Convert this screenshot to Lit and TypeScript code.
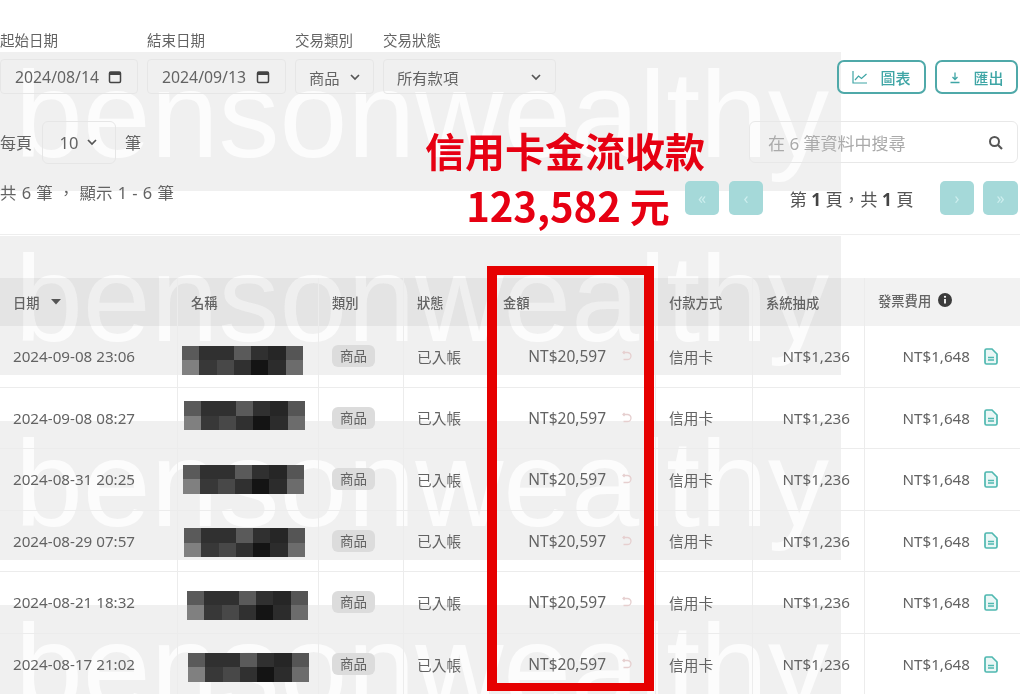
import { LitElement, html, css, svg } from 'lit';
import { customElement } from 'lit/decorators.js';

const TOP = [0x5a, 0x30, 0x30, 0x5a, 0x30, 0x26, 0x55];
const BOTTOM = [0x80, 0x38, 0x48, 0x30, 0x14, 0x2c, 0x6c];

const ROWS = [
  { date: '2024-09-08 23:06', x: 4, y: 4 },
  { date: '2024-09-08 08:27', x: 6, y: -2 },
  { date: '2024-08-31 20:25', x: 5, y: 0 },
  { date: '2024-08-29 07:57', x: 6, y: 2 },
  { date: '2024-08-21 18:32', x: 9, y: 3 },
  { date: '2024-08-17 21:02', x: 10, y: 3 },
];

const BANDS = [52, 236, 421, 605];

const calendar = svg`<svg class="ico" width="14" height="14" viewBox="0 0 14 14"><rect x="1.5" y="2" width="11" height="10.5" rx="1.2" fill="none" stroke="#444" stroke-width="1.5"/><rect x="1.5" y="2" width="11" height="3" fill="#444"/></svg>`;
const chevron = svg`<svg class="ico" width="12" height="12" viewBox="0 0 12 12"><path d="M2 4l4 4 4-4" fill="none" stroke="#555" stroke-width="1.7"/></svg>`;
const chart = svg`<svg class="ico" width="16" height="14" viewBox="0 0 16 14"><path d="M1 1v12h14M3 10l3.5-4 3 2.5L14.5 4" fill="none" stroke="#3ea5a5" stroke-width="1.2"/></svg>`;
const download = svg`<svg class="ico" width="12" height="13" viewBox="0 0 12 13"><path d="M6 1.5v7M3.5 6L6 8.5 8.5 6M1.5 11.5h9" fill="none" stroke="#3ea5a5" stroke-width="1.3"/></svg>`;
const search = svg`<svg class="ico" width="15" height="15" viewBox="0 0 15 15"><circle cx="6.5" cy="6.5" r="4.5" fill="none" stroke="#555" stroke-width="2"/><path d="M10 10l4 4" stroke="#555" stroke-width="2.2"/></svg>`;
const undo = svg`<svg class="ico" width="12" height="12" viewBox="0 0 12 12"><path d="M3 2.5h4.5a3 3 0 0 1 0 7H3.5M4.5 1L3 2.5 4.5 4" fill="none" stroke="#e6cfcf" stroke-width="1.3"/></svg>`;
const doc = svg`<svg class="ico" width="14" height="17" viewBox="0 0 14 17"><path d="M2.5 1H8l5 5v8.5a1.5 1.5 0 0 1-1.5 1.5h-9A1.5 1.5 0 0 1 1 14.5v-12A1.5 1.5 0 0 1 2.5 1z" fill="#eaf7f6" stroke="#4fb8b0" stroke-width="1.7"/><path d="M4 9.5h6M4 12h6" stroke="#4fb8b0" stroke-width="1.3"/></svg>`;
const info = svg`<svg class="ico" width="14" height="14" viewBox="0 0 14 14"><circle cx="7" cy="7" r="7" fill="#3c3c3c"/><path d="M7 6v4.5" stroke="#fff" stroke-width="1.8"/><circle cx="7" cy="3.8" r="1.1" fill="#fff"/></svg>`;
const caret = svg`<svg class="ico" width="10" height="6" viewBox="0 0 10 6"><path d="M0 0h10L5 5.5z" fill="#555"/></svg>`;

@customElement('app-root')
export class AppRoot extends LitElement {
  static styles = css`
    :host {
      display: block;
      width: 1020px;
      height: 694px;
      overflow: hidden;
      background: #fff;
      color: #636363;
      font-family: "Noto Sans", "Noto Sans CJK TC", sans-serif;
    }
    .page {
      position: relative;
      width: 1020px;
      height: 694px;
      overflow: hidden;
      filter: blur(0.45px);
    }
    .content {
      position: relative;
    }
    .ico {
      display: block;
      flex: none;
    }

    .filters {
      display: flex;
      justify-content: space-between;
      padding: 30px 2px 0 0;
      height: 64px;
    }
    .fields {
      display: flex;
      gap: 9px;
    }
    .field label {
      display: block;
      font-size: 14.5px;
      line-height: 20px;
      height: 29px;
    }
    .box {
      height: 35px;
      box-sizing: border-box;
      border: 1px solid #e6e6e6;
      border-radius: 4px;
      display: flex;
      align-items: center;
      justify-content: space-between;
      font-size: 15.3px;
    }
    .date { width: 138px; padding: 0 15px 0 14px; font-size: 15.8px; }
    .date.wide { width: 139px; }
    .kind { width: 79px; padding: 0 12px 0 13px; }
    .status { width: 173px; padding: 0 13px 0 13px; }
    .actions {
      display: flex;
      gap: 9px;
      padding-top: 30px;
    }
    .action {
      height: 34px;
      box-sizing: border-box;
      border: 2px solid #4fa9a9;
      border-radius: 7px;
      display: flex;
      align-items: center;
      justify-content: center;
      gap: 12px;
      color: #3ea5a5;
      font-size: 15px;
      font-weight: 500;
    }
    .a1 { width: 89px; }
    .a2 { width: 83px; }

    .tools {
      display: flex;
      justify-content: space-between;
      align-items: center;
      margin-top: 27px;
      padding-right: 2px;
      height: 42px;
    }
    .size {
      display: flex;
      align-items: center;
      font-size: 16px;
    }
    .size-box {
      width: 74px;
      height: 43px;
      box-sizing: border-box;
      margin: 0 9px 0 10px;
      border: 1px solid #e6e6e6;
      border-radius: 6px;
      display: flex;
      align-items: center;
      justify-content: center;
      gap: 8px;
      font-size: 16.5px;
    }
    .search {
      width: 269px;
      height: 42px;
      box-sizing: border-box;
      border: 1px solid #e8e8e8;
      border-radius: 6px;
      padding: 0 14px 0 18px;
      display: flex;
      align-items: center;
      justify-content: space-between;
      color: #aaa;
      font-size: 17px;
    }

    .info {
      display: flex;
      justify-content: space-between;
      margin-top: 18px;
      padding-right: 2px;
      height: 34px;
    }
    .count {
      font-size: 16.4px;
      line-height: 24px;
      word-spacing: 1px;
    }
    .pager {
      display: flex;
      align-items: center;
    }
    .pg {
      width: 34px;
      height: 34px;
      border-radius: 5px;
      background: #a5d9d9;
      color: #cdeeee;
      display: flex;
      align-items: center;
      justify-content: center;
      font-size: 16px;
      margin-left: 10px;
    }
    .pg.a { margin-left: 0; }
    .pg.c { margin-left: 9px; width: 35px; }
    .pg-text {
      width: 177px;
      text-align: center;
      color: #555;
      font-size: 17.3px;
    }
    .pg-text b {
      color: #444;
    }
    .rule {
      height: 1px;
      margin-top: 19px;
      background: #eee;
    }

    .table {
      margin-top: 43px;
    }
    .row {
      display: grid;
      grid-template-columns: 178px 141px 85px 86px 166px 97px 112px 155px;
      height: 61.5px;
      box-sizing: border-box;
      border-bottom: 1px solid #ececec;
      align-items: stretch;
    }
    .row:last-child {
      border-bottom: none;
    }
    .cell {
      display: flex;
      align-items: center;
      padding: 0 13px;
      border-right: 1px solid #ececec;
      font-size: 14.7px;
      min-width: 0;
      white-space: nowrap;
    }
    .head {
      height: 48px;
      background: rgba(0, 0, 0, 0.05);
      border-bottom: none;
    }
    .head .cell {
      font-size: 13.3px;
      font-weight: 500;
    }
    .date-cell {
      font-size: 15.2px;
    }
    .num {
      justify-content: flex-end;
      font-size: 15.2px;
    }
    .sort { gap: 11px; }
    .last { border-right: none; }
    .gap-head { gap: 7px; padding-bottom: 4px; }
    .name { padding: 0; }
    .mosaic {
      display: grid;
      grid-template-columns: repeat(7, 17.3px);
      grid-auto-rows: 14.5px;
      flex: none;
    }
    .tag {
      background: #dcdcdc;
      border-radius: 6px;
      padding: 0 8px;
      height: 22px;
      line-height: 22px;
      font-size: 13.5px;
    }
    .amount { gap: 14px; padding-right: 23px; font-size: 15.5px; }
    .sys { padding-right: 14px; }
    .fee { gap: 14px; padding-right: 22px; }

    .band {
      position: absolute;
      left: 0;
      width: 841px;
      height: 139px;
      overflow: hidden;
      background: rgba(0, 0, 0, 0.06);
    }
    .band span {
      position: absolute;
      left: 15px;
      top: -13px;
      color: rgba(255, 255, 255, 0.8);
      font: 122px/1.25 "Liberation Sans", sans-serif;
      white-space: nowrap;
    }
    .callout {
      position: absolute;
      left: 0;
      top: 123px;
      width: 1130px;
      text-align: center;
      color: #e60012;
      font-weight: 700;
      line-height: 55px;
      font-size: 40px;
      font-family: "Noto Sans CJK TC", sans-serif;
    }
    .callout div + div {
      padding-left: 6px;
    }
    .frame {
      position: absolute;
      left: 487px;
      top: 266px;
      width: 167px;
      height: 425px;
      box-sizing: border-box;
      border: 10px solid #e60000;
      border-top-width: 9px;
      border-bottom-width: 8px;
    }
  `;

  private mosaic(x: number, y: number) {
    const cells = [...TOP, ...BOTTOM];
    return html`<div class="mosaic" style="transform: translate(${x}px, ${y}px)">
      ${cells.map(v => html`<div style="background: rgb(${v}, ${v}, ${v})"></div>`)}
    </div>`;
  }

  render() {
    return html`
      <div class="page">
        ${BANDS.map(top => html`<div class="band" style="top: ${top}px"><span>bensonwealthy</span></div>`)}

        <div class="content">
          <div class="filters">
            <div class="fields">
              <div class="field"><label>起始日期</label><div class="box date">2024/08/14 ${calendar}</div></div>
              <div class="field"><label>結束日期</label><div class="box date wide">2024/09/13 ${calendar}</div></div>
              <div class="field"><label>交易類別</label><div class="box kind">商品 ${chevron}</div></div>
              <div class="field"><label>交易狀態</label><div class="box status">所有款項 ${chevron}</div></div>
            </div>
            <div class="actions">
              <div class="action a1">${chart}<span>圖表</span></div>
              <div class="action a2">${download}<span>匯出</span></div>
            </div>
          </div>

          <div class="tools">
            <div class="size">每頁<div class="size-box">10 ${chevron}</div>筆</div>
            <div class="search">在 6 筆資料中搜尋 ${search}</div>
          </div>

          <div class="info">
            <div class="count">共 6 筆 ， 顯示 1 - 6 筆</div>
            <div class="pager">
              <div class="pg a">«</div>
              <div class="pg">‹</div>
              <div class="pg-text">第 <b>1</b> 頁，共 <b>1</b> 頁</div>
              <div class="pg a">›</div>
              <div class="pg c">»</div>
            </div>
          </div>
          <div class="rule"></div>

          <div class="table">
            <div class="row head">
              <div class="cell sort">日期 ${caret}</div>
              <div class="cell">名稱</div>
              <div class="cell">類別</div>
              <div class="cell">狀態</div>
              <div class="cell">金額</div>
              <div class="cell">付款方式</div>
              <div class="cell">系統抽成</div>
              <div class="cell last gap-head">發票費用 ${info}</div>
            </div>
            ${ROWS.map(r => html`
              <div class="row">
                <div class="cell date-cell">${r.date}</div>
                <div class="cell name">${this.mosaic(r.x, r.y)}</div>
                <div class="cell"><span class="tag">商品</span></div>
                <div class="cell">已入帳</div>
                <div class="cell num amount">NT$20,597 ${undo}</div>
                <div class="cell">信用卡</div>
                <div class="cell num sys">NT$1,236</div>
                <div class="cell num fee last">NT$1,648 ${doc}</div>
              </div>
            `)}
          </div>
        </div>

        <div class="callout">
          <div>信用卡金流收款</div>
          <div>123,582 元</div>
        </div>
        <div class="frame"></div>
      </div>
    `;
  }
}
